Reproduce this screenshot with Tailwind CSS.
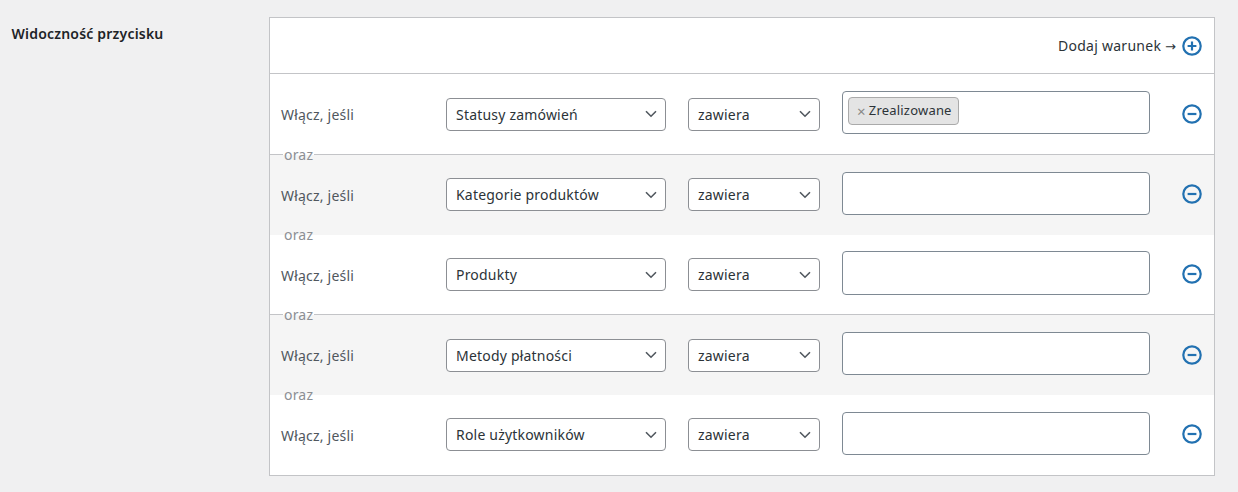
<!DOCTYPE html>
<html lang="pl">
<head>
  <meta charset="UTF-8">
  <title>Widoczność przycisku</title>
  <script src="https://cdn.jsdelivr.net/npm/@tailwindcss/browser@4"></script>
</head>
<body class="bg-[#f0f0f1] h-[492px] overflow-hidden font-['Noto_Sans',sans-serif] text-[14px] tracking-[0.2px] text-[#50575e]">
  <div class="flex items-start pt-[17px]">
    <div class="w-[269px] pl-[11.5px] pt-[6px] font-semibold text-[#1d2327] leading-5 mt-px">Widoczność przycisku</div>

    <div class="w-[946px] h-[459px] border border-[#c3c4c7] bg-white flex flex-col">
      <div class="h-[56px] shrink-0 flex items-center justify-end gap-[6px] pr-[12px] border-b border-[#c3c4c7] text-[#2c3338]">
        <span class="tracking-[0.27px]">Dodaj warunek <span class="font-['DejaVu_Sans',sans-serif] text-[13px] tracking-normal">→</span></span>
        <svg class="w-5 h-5" viewBox="0 0 20 20" fill="none" stroke="#2271b1" stroke-width="2.2"><circle cx="10" cy="10" r="8.7"/><path d="M5.6 10h8.8M10 5.6v8.8"/></svg>
      </div>

      <!-- rows -->
      <div class="relative h-[81px] shrink-0 flex items-center pl-[11px] pr-[12px] border-b border-[#c3c4c7]">
        <span class="w-[165px]">Włącz, jeśli</span>
        <div class="w-[220px] h-[33px] flex items-center justify-between pl-[9px] pr-[8px] border border-[#8c8f94] rounded-[4px] bg-white text-[#2c3338]">
          <span>Statusy zamówień</span>
          <svg class="w-3 h-2" viewBox="0 0 12 8" fill="none" stroke="#50575e" stroke-width="1.6"><path d="M1 1.2l5 5 5-5"/></svg>
        </div>
        <div class="ml-[22px] w-[132px] h-[33px] flex items-center justify-between pl-[9px] pr-[8px] border border-[#8c8f94] rounded-[4px] bg-white text-[#2c3338]">
          <span>zawiera</span>
          <svg class="w-3 h-2" viewBox="0 0 12 8" fill="none" stroke="#50575e" stroke-width="1.6"><path d="M1 1.2l5 5 5-5"/></svg>
        </div>
        <div class="ml-[22px] mb-[3px] w-[308px] h-[43px] flex items-center pl-[5px] border border-[#7e8993] rounded-[4px] bg-white">
          <span class="h-[28px] mb-[3px] flex items-center gap-[3px] pl-[8px] pr-[6px] border border-[#aaaaaa] rounded-[4px] bg-[#e4e4e4] text-[13px] text-[#2c3338]"><span class="text-[#888888] text-[15px]">×</span>Zrealizowane</span>
        </div>
        <svg class="ml-auto w-5 h-5" viewBox="0 0 20 20" fill="none" stroke="#2271b1" stroke-width="2.2"><circle cx="10" cy="10" r="8.7"/><path d="M5.6 10h8.8"/></svg>
      </div>

      <div class="relative h-[80px] shrink-0 flex items-center pl-[11px] pr-[12px] pb-px bg-[#f5f5f5]">
        <span class="absolute left-[13px] -top-[10px] px-px leading-5 text-[#8c8f94] bg-[linear-gradient(to_bottom,#fff_50%,#f5f5f5_50%)]">oraz</span>
        <span class="w-[165px] mt-px">Włącz, jeśli</span>
        <div class="w-[220px] h-[33px] flex items-center justify-between pl-[9px] pr-[8px] border border-[#8c8f94] rounded-[4px] bg-white text-[#2c3338]">
          <span>Kategorie produktów</span>
          <svg class="w-3 h-2" viewBox="0 0 12 8" fill="none" stroke="#50575e" stroke-width="1.6"><path d="M1 1.2l5 5 5-5"/></svg>
        </div>
        <div class="ml-[22px] w-[132px] h-[33px] flex items-center justify-between pl-[9px] pr-[8px] border border-[#8c8f94] rounded-[4px] bg-white text-[#2c3338]">
          <span>zawiera</span>
          <svg class="w-3 h-2" viewBox="0 0 12 8" fill="none" stroke="#50575e" stroke-width="1.6"><path d="M1 1.2l5 5 5-5"/></svg>
        </div>
        <div class="ml-[22px] mb-[2px] w-[308px] h-[43px] border border-[#7e8993] rounded-[4px] bg-white"></div>
        <svg class="ml-auto mb-px w-5 h-5" viewBox="0 0 20 20" fill="none" stroke="#2271b1" stroke-width="2.2"><circle cx="10" cy="10" r="8.7"/><path d="M5.6 10h8.8"/></svg>
      </div>

      <div class="relative h-[80px] shrink-0 flex items-center pl-[11px] pr-[12px] border-b border-[#c3c4c7]">
        <span class="absolute left-[13px] -top-[10px] px-px leading-5 text-[#8c8f94]">oraz</span>
        <span class="w-[165px] mt-px">Włącz, jeśli</span>
        <div class="w-[220px] h-[33px] flex items-center justify-between pl-[9px] pr-[8px] border border-[#8c8f94] rounded-[4px] bg-white text-[#2c3338]">
          <span>Produkty</span>
          <svg class="w-3 h-2" viewBox="0 0 12 8" fill="none" stroke="#50575e" stroke-width="1.6"><path d="M1 1.2l5 5 5-5"/></svg>
        </div>
        <div class="ml-[22px] w-[132px] h-[33px] flex items-center justify-between pl-[9px] pr-[8px] border border-[#8c8f94] rounded-[4px] bg-white text-[#2c3338]">
          <span>zawiera</span>
          <svg class="w-3 h-2" viewBox="0 0 12 8" fill="none" stroke="#50575e" stroke-width="1.6"><path d="M1 1.2l5 5 5-5"/></svg>
        </div>
        <div class="ml-[22px] mb-[3px] w-[308px] h-[44px] border border-[#7e8993] rounded-[4px] bg-white"></div>
        <svg class="ml-auto mb-px w-5 h-5" viewBox="0 0 20 20" fill="none" stroke="#2271b1" stroke-width="2.2"><circle cx="10" cy="10" r="8.7"/><path d="M5.6 10h8.8"/></svg>
      </div>

      <div class="relative h-[80px] shrink-0 flex items-center pl-[11px] pr-[12px] bg-[#f5f5f5]">
        <span class="absolute left-[13px] -top-[10px] px-px leading-5 text-[#8c8f94] bg-[linear-gradient(to_bottom,#fff_50%,#f5f5f5_50%)]">oraz</span>
        <span class="w-[165px]">Włącz, jeśli</span>
        <div class="w-[220px] h-[33px] flex items-center justify-between pl-[9px] pr-[8px] border border-[#8c8f94] rounded-[4px] bg-white text-[#2c3338]">
          <span>Metody płatności</span>
          <svg class="w-3 h-2" viewBox="0 0 12 8" fill="none" stroke="#50575e" stroke-width="1.6"><path d="M1 1.2l5 5 5-5"/></svg>
        </div>
        <div class="ml-[22px] w-[132px] h-[33px] flex items-center justify-between pl-[9px] pr-[8px] border border-[#8c8f94] rounded-[4px] bg-white text-[#2c3338]">
          <span>zawiera</span>
          <svg class="w-3 h-2" viewBox="0 0 12 8" fill="none" stroke="#50575e" stroke-width="1.6"><path d="M1 1.2l5 5 5-5"/></svg>
        </div>
        <div class="ml-[22px] mb-[3px] w-[308px] h-[43px] border border-[#7e8993] rounded-[4px] bg-white"></div>
        <svg class="ml-auto w-5 h-5" viewBox="0 0 20 20" fill="none" stroke="#2271b1" stroke-width="2.2"><circle cx="10" cy="10" r="8.7"/><path d="M5.6 10h8.8"/></svg>
      </div>

      <div class="relative h-[80px] shrink-0 flex items-center pl-[11px] pr-[12px]">
        <span class="absolute left-[13px] -top-[10px] px-px leading-5 text-[#8c8f94]">oraz</span>
        <span class="w-[165px]">Włącz, jeśli</span>
        <div class="w-[220px] h-[33px] mb-px flex items-center justify-between pl-[9px] pr-[8px] border border-[#8c8f94] rounded-[4px] bg-white text-[#2c3338]">
          <span>Role użytkowników</span>
          <svg class="w-3 h-2" viewBox="0 0 12 8" fill="none" stroke="#50575e" stroke-width="1.6"><path d="M1 1.2l5 5 5-5"/></svg>
        </div>
        <div class="ml-[22px] w-[132px] h-[33px] mb-px flex items-center justify-between pl-[9px] pr-[8px] border border-[#8c8f94] rounded-[4px] bg-white text-[#2c3338]">
          <span>zawiera</span>
          <svg class="w-3 h-2" viewBox="0 0 12 8" fill="none" stroke="#50575e" stroke-width="1.6"><path d="M1 1.2l5 5 5-5"/></svg>
        </div>
        <div class="ml-[22px] mb-[3px] w-[308px] h-[43px] border border-[#7e8993] rounded-[4px] bg-white"></div>
        <svg class="ml-auto mb-[2px] w-5 h-5" viewBox="0 0 20 20" fill="none" stroke="#2271b1" stroke-width="2.2"><circle cx="10" cy="10" r="8.7"/><path d="M5.6 10h8.8"/></svg>
      </div>
    </div>
  </div>
</body>
</html>
